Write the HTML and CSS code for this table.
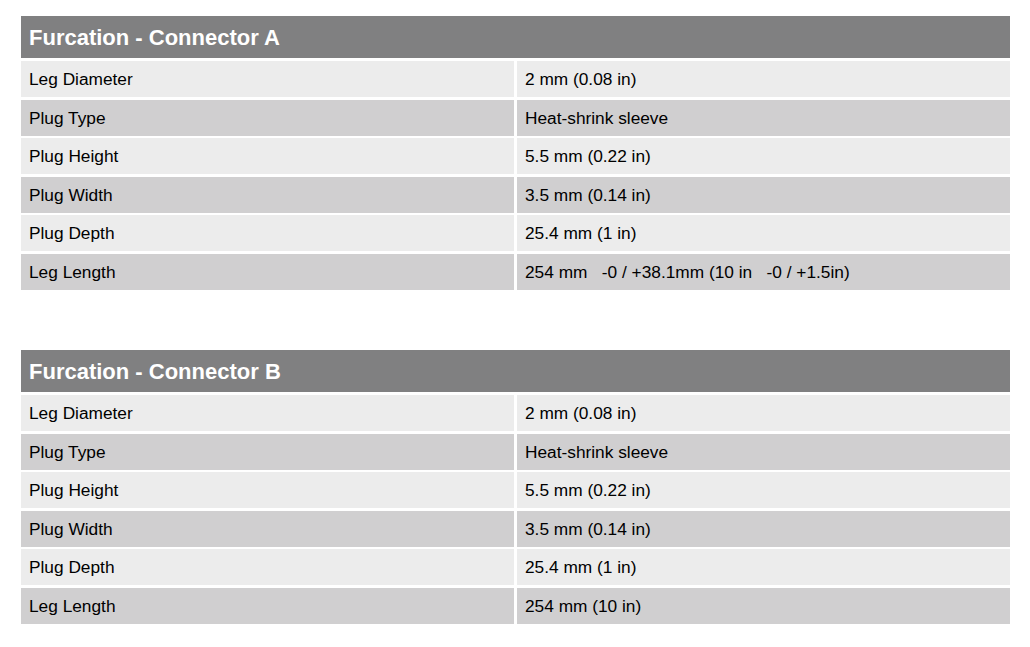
FILE: index.html
```html
<!DOCTYPE html>
<html>
<head>
<meta charset="utf-8">
<link rel="stylesheet" href="styles.css">
</head>
<body>
<div class="page">
  <section class="spec">
    <div class="spec-head">Furcation - Connector A</div>
    <div class="cell light">Leg Diameter</div><div class="cell light">2 mm (0.08 in)</div>
    <div class="cell dark">Plug Type</div><div class="cell dark">Heat-shrink sleeve</div>
    <div class="cell light">Plug Height</div><div class="cell light">5.5 mm (0.22 in)</div>
    <div class="cell dark">Plug Width</div><div class="cell dark">3.5 mm (0.14 in)</div>
    <div class="cell light">Plug Depth</div><div class="cell light">25.4 mm (1 in)</div>
    <div class="cell dark">Leg Length</div><div class="cell dark pre">254 mm   -0 / +38.1mm (10 in   -0 / +1.5in)</div>
  </section>
  <section class="spec">
    <div class="spec-head">Furcation - Connector B</div>
    <div class="cell light">Leg Diameter</div><div class="cell light">2 mm (0.08 in)</div>
    <div class="cell dark">Plug Type</div><div class="cell dark">Heat-shrink sleeve</div>
    <div class="cell light">Plug Height</div><div class="cell light">5.5 mm (0.22 in)</div>
    <div class="cell dark">Plug Width</div><div class="cell dark">3.5 mm (0.14 in)</div>
    <div class="cell light">Plug Depth</div><div class="cell light">25.4 mm (1 in)</div>
    <div class="cell dark">Leg Length</div><div class="cell dark">254 mm (10 in)</div>
  </section>
</div>
</body>
</html>
```
FILE: styles.css
```css
html, body {
  margin: 0;
  padding: 0;
  background: #ffffff;
}
body {
  font-family: "Liberation Sans", Arial, sans-serif;
  color: #000000;
}
.page {
  width: 989px;
  padding: 16px 0 0 21px;
  display: flex;
  flex-direction: column;
  gap: 60px;
}
.spec {
  display: grid;
  grid-template-columns: 493px 493px;
  column-gap: 3px;
  row-gap: 2.6px;
}
.spec-head {
  grid-column: 1 / -1;
  box-sizing: border-box;
  height: 42px;
  background: #808081;
  color: #ffffff;
  font-weight: bold;
  font-size: 22px;
  line-height: 40px;
  padding: 2px 0 0 8px;
  margin-bottom: 0.4px;
}
.cell {
  box-sizing: border-box;
  height: 36px;
  line-height: 35px;
  font-size: 17.3px;
  padding: 1px 0 0 8px;
  white-space: nowrap;
}
.light { background: #ececec; }
.dark { background: #d0cfd0; }
.pre { white-space: pre; }
```
